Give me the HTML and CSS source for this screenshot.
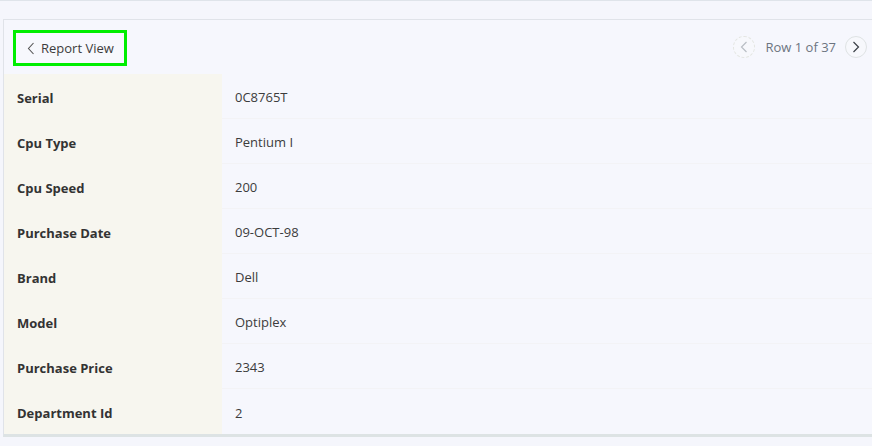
FILE: index.html
```html
<!DOCTYPE html>
<html>
<head>
<meta charset="utf-8">
<link rel="stylesheet" href="styles.css">
</head>
<body>
<div class="page">
  <div class="card">
    <div class="header">
      <button class="back">
        <svg class="chev" width="8" height="13" viewBox="0 0 8 13"><path d="M6.5 1 L1.5 6.5 L6.5 12" fill="none" stroke="#555" stroke-width="1.1"/></svg>
        <span>Report View</span>
      </button>
      <div class="pager">
        <span class="circle disabled"><svg width="8" height="12" viewBox="0 0 8 12"><path d="M6.5 1 L1.5 6 L6.5 11" fill="none" stroke="#b9bec4" stroke-width="1.2"/></svg></span>
        <span class="rowinfo">Row 1 of 37</span>
        <span class="circle"><svg width="8" height="12" viewBox="0 0 8 12"><path d="M1.5 1 L6.5 6 L1.5 11" fill="none" stroke="#3a3f46" stroke-width="1.2"/></svg></span>
      </div>
    </div>
    <div class="table">
      <div class="lbl">Serial</div><div class="val">0C8765T</div>
      <div class="lbl">Cpu Type</div><div class="val">Pentium I</div>
      <div class="lbl">Cpu Speed</div><div class="val">200</div>
      <div class="lbl">Purchase Date</div><div class="val">09-OCT-98</div>
      <div class="lbl">Brand</div><div class="val">Dell</div>
      <div class="lbl">Model</div><div class="val">Optiplex</div>
      <div class="lbl">Purchase Price</div><div class="val">2343</div>
      <div class="lbl">Department Id</div><div class="val last">2</div>
    </div>
  </div>
</div>
</body>
</html>
```

FILE: styles.css
```css
html, body {
  margin: 0;
  padding: 0;
}
body {
  background: #f5f6fc;
  border-top: 1px solid #dfe4ea;
  font-family: "Open Sans", "Noto Sans", sans-serif;
  font-size: 13px;
  color: #3a3a3a;
  overflow: hidden;
  height: 445px;
}
.page {
  padding: 18px 0 0 3px;
}
.card {
  border: 1px solid #e0e3e9;
  border-right: none;
  border-bottom: 3px solid #dde3e4;
  background: #f6f7fd;
}
.header {
  height: 54px;
  display: flex;
  align-items: center;
  justify-content: space-between;
  padding: 0 5px 0 9px;
}
.back {
  display: flex;
  align-items: center;
  gap: 6px;
  height: 36px;
  width: 114px;
  box-sizing: border-box;
  border: 3px solid #00ee00;
  background: #f7f8fd;
  padding: 0 0 0 11px;
  margin-top: 2px;
  font-family: inherit;
  font-size: 13px;
  color: #3c3c3c;
}
.chev {
  flex: none;
}
.pager {
  display: flex;
  align-items: center;
}
.circle {
  width: 22px;
  height: 22px;
  box-sizing: border-box;
  border: 1px solid #dfe3e4;
  border-radius: 50%;
  display: flex;
  align-items: center;
  justify-content: center;
  background: #f7f8fc;
}
.circle.disabled {
  border-style: dashed;
  border-color: #e4e6e2;
}
.rowinfo {
  color: #6c7480;
  margin: 0 9px 0 10px;
}
.table {
  display: grid;
  grid-template-columns: 218px 1fr;
}
.lbl {
  background: #f7f6ef;
  font-weight: 700;
  height: 45px;
  display: flex;
  align-items: center;
  padding: 2px 0 0 13px;
  color: #333;
  box-sizing: border-box;
}
.val {
  height: 45px;
  display: flex;
  align-items: center;
  padding: 2px 0 0 13px;
  border-bottom: 1px solid #f3f3f6;
  box-sizing: border-box;
  color: #3c3c3c;
}
.val.last {
  border-bottom: none;
}
```
